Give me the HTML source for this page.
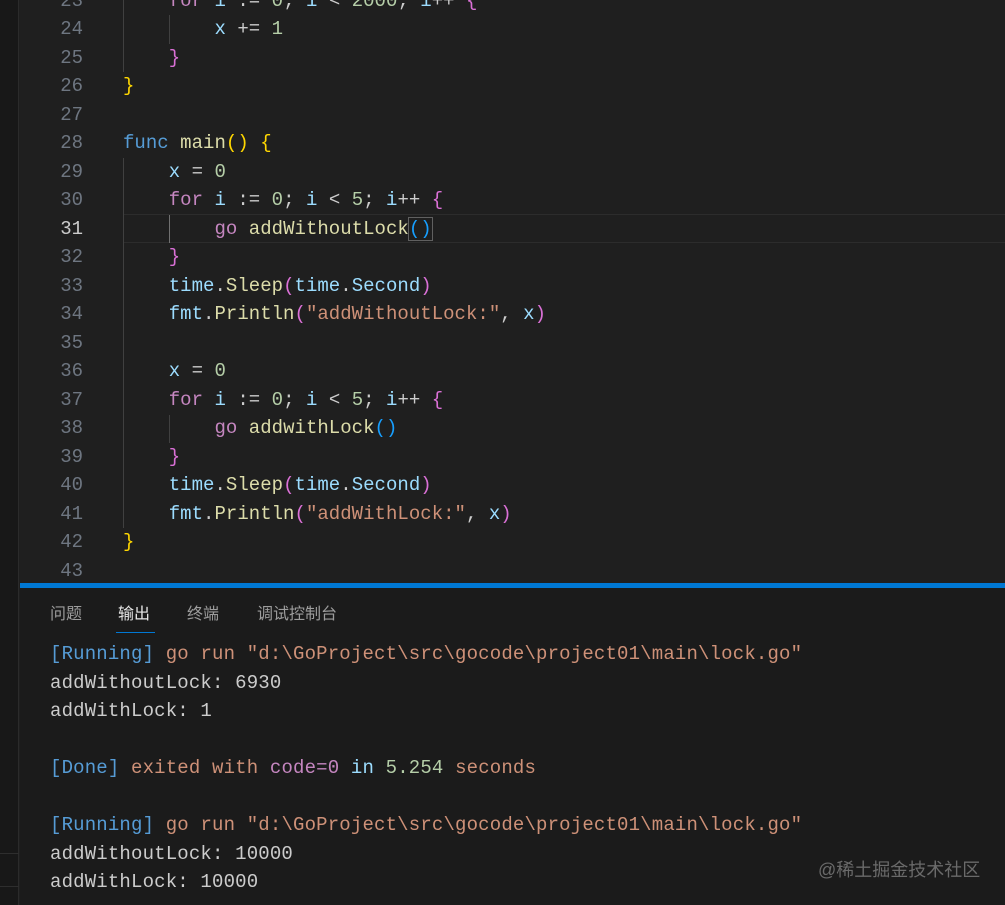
<!DOCTYPE html>
<html><head><meta charset="utf-8"><style>
*{margin:0;padding:0;box-sizing:border-box}
body{width:1005px;height:905px;overflow:hidden;background:#1f1f1f;position:relative;font-family:"Liberation Mono","DejaVu Sans Mono",monospace;font-size:19px;letter-spacing:0.17px;color:#cccccc}
.side{position:absolute;left:0;top:0;width:19px;height:905px;background:#181818;border-right:1px solid #2b2b2b}
.ed{position:absolute;left:20px;top:0;width:985px;height:583px;background:#1f1f1f}
.ln{position:absolute;left:20px;width:63px;text-align:right;color:#6e7681;height:28.5px;line-height:28.5px;letter-spacing:0}
.cd{position:absolute;left:123px;white-space:pre;height:28.5px;line-height:28.5px;letter-spacing:0.03px}
.guide{position:absolute;width:1px;background:#404040}
.cur{position:absolute;left:123px;right:0;top:214px;height:29px;border-top:1px solid #2c2c2c;border-bottom:1px solid #2c2c2c}
.k{color:#569cd6}.p{color:#c586c0}.f{color:#dcdcaa}.v{color:#9cdcfe}.n{color:#b5cea8}.s{color:#ce9178}
.b1{color:#ffd700}.b2{color:#da70d6}.b3{color:#179fff}
.bar{position:absolute;left:20px;right:0;top:583px;height:5px;background:#0078d4}
.panel{position:absolute;left:20px;right:0;top:588px;bottom:0;background:#1b1b1b}
.tab{position:absolute;top:603px;font-family:"Liberation Sans","Noto Sans CJK SC",sans-serif;font-size:16px;color:#9d9d9d;line-height:24px;letter-spacing:0}
.out{position:absolute;left:50px;white-space:pre;line-height:28.5px;height:28.5px}
.wm{position:absolute;left:818px;top:856px;font-family:"Liberation Sans","Noto Sans CJK SC",sans-serif;font-size:18px;color:#6a6a6a;letter-spacing:0}
</style></head><body>
<div class="side"></div>
<div class="ed"></div>
<div style="position:absolute;left:0;top:853px;width:19px;height:1px;background:#2e2e2e"></div>
<div style="position:absolute;left:0;top:886px;width:19px;height:1px;background:#2e2e2e"></div>
<div class="cur"></div>
<div class="guide" style="left:123px;top:0;height:72px"></div>
<div class="guide" style="left:169px;top:15px;height:29px"></div>
<div class="guide" style="left:123px;top:158px;height:370px"></div>
<div class="guide" style="left:169px;top:215px;height:28px;background:#707070"></div>
<div class="guide" style="left:169px;top:415px;height:28px"></div>

<div class="ln" style="top:-13.5px">23</div><div class="cd" style="top:-13.5px">    <span class="p">for</span> <span class="v">i</span> := <span class="n">0</span>; <span class="v">i</span> &lt; <span class="n">2000</span>; <span class="v">i</span>++ <span class="b2">{</span></div>
<div class="ln" style="top:15px">24</div><div class="cd" style="top:15px">        <span class="v">x</span> += <span class="n">1</span></div>
<div class="ln" style="top:43.5px">25</div><div class="cd" style="top:43.5px">    <span class="b2">}</span></div>
<div class="ln" style="top:72px">26</div><div class="cd" style="top:72px"><span class="b1">}</span></div>
<div class="ln" style="top:100.5px">27</div>
<div class="ln" style="top:129px">28</div><div class="cd" style="top:129px"><span class="k">func</span> <span class="f">main</span><span class="b1">()</span> <span class="b1">{</span></div>
<div class="ln" style="top:157.5px">29</div><div class="cd" style="top:157.5px">    <span class="v">x</span> = <span class="n">0</span></div>
<div class="ln" style="top:186px">30</div><div class="cd" style="top:186px">    <span class="p">for</span> <span class="v">i</span> := <span class="n">0</span>; <span class="v">i</span> &lt; <span class="n">5</span>; <span class="v">i</span>++ <span class="b2">{</span></div>
<div class="ln" style="top:214.5px;color:#cccccc">31</div><div class="cd" style="top:214.5px">        <span class="p">go</span> <span class="f">addWithoutLock</span><span class="b3" style="outline:1px solid #606060">()</span></div>
<div class="ln" style="top:243px">32</div><div class="cd" style="top:243px">    <span class="b2">}</span></div>
<div class="ln" style="top:271.5px">33</div><div class="cd" style="top:271.5px">    <span class="v">time</span>.<span class="f">Sleep</span><span class="b2">(</span><span class="v">time</span>.<span class="v">Second</span><span class="b2">)</span></div>
<div class="ln" style="top:300px">34</div><div class="cd" style="top:300px">    <span class="v">fmt</span>.<span class="f">Println</span><span class="b2">(</span><span class="s">"addWithoutLock:"</span>, <span class="v">x</span><span class="b2">)</span></div>
<div class="ln" style="top:328.5px">35</div>
<div class="ln" style="top:357px">36</div><div class="cd" style="top:357px">    <span class="v">x</span> = <span class="n">0</span></div>
<div class="ln" style="top:385.5px">37</div><div class="cd" style="top:385.5px">    <span class="p">for</span> <span class="v">i</span> := <span class="n">0</span>; <span class="v">i</span> &lt; <span class="n">5</span>; <span class="v">i</span>++ <span class="b2">{</span></div>
<div class="ln" style="top:414px">38</div><div class="cd" style="top:414px">        <span class="p">go</span> <span class="f">addwithLock</span><span class="b3">()</span></div>
<div class="ln" style="top:442.5px">39</div><div class="cd" style="top:442.5px">    <span class="b2">}</span></div>
<div class="ln" style="top:471px">40</div><div class="cd" style="top:471px">    <span class="v">time</span>.<span class="f">Sleep</span><span class="b2">(</span><span class="v">time</span>.<span class="v">Second</span><span class="b2">)</span></div>
<div class="ln" style="top:499.5px">41</div><div class="cd" style="top:499.5px">    <span class="v">fmt</span>.<span class="f">Println</span><span class="b2">(</span><span class="s">"addWithLock:"</span>, <span class="v">x</span><span class="b2">)</span></div>
<div class="ln" style="top:528px">42</div><div class="cd" style="top:528px"><span class="b1">}</span></div>
<div class="ln" style="top:556.5px">43</div>

<div class="bar"></div>
<div class="panel"></div>
<div class="tab" style="left:50px">问题</div>
<div class="tab" style="left:118px;color:#e7e7e7">输出</div>
<div style="position:absolute;left:116px;top:632px;width:39px;height:1px;background:#0078d4"></div>
<div class="tab" style="left:187px">终端</div>
<div class="tab" style="left:257px">调试控制台</div>

<div class="out" style="top:640px"><span class="k">[Running]</span> <span class="s">go run "d:\GoProject\src\gocode\project01\main\lock.go"</span></div>
<div class="out" style="top:668.5px">addWithoutLock: 6930</div>
<div class="out" style="top:697px">addWithLock: 1</div>
<div class="out" style="top:754px"><span class="k">[Done]</span> <span class="s">exited with</span> <span class="p">code=0</span> <span class="v">in</span> <span class="n">5.254</span> <span class="s">seconds</span></div>
<div class="out" style="top:811px"><span class="k">[Running]</span> <span class="s">go run "d:\GoProject\src\gocode\project01\main\lock.go"</span></div>
<div class="out" style="top:839.5px">addWithoutLock: 10000</div>
<div class="out" style="top:868px">addWithLock: 10000</div>
<div class="wm">@稀土掘金技术社区</div>
</body></html>
